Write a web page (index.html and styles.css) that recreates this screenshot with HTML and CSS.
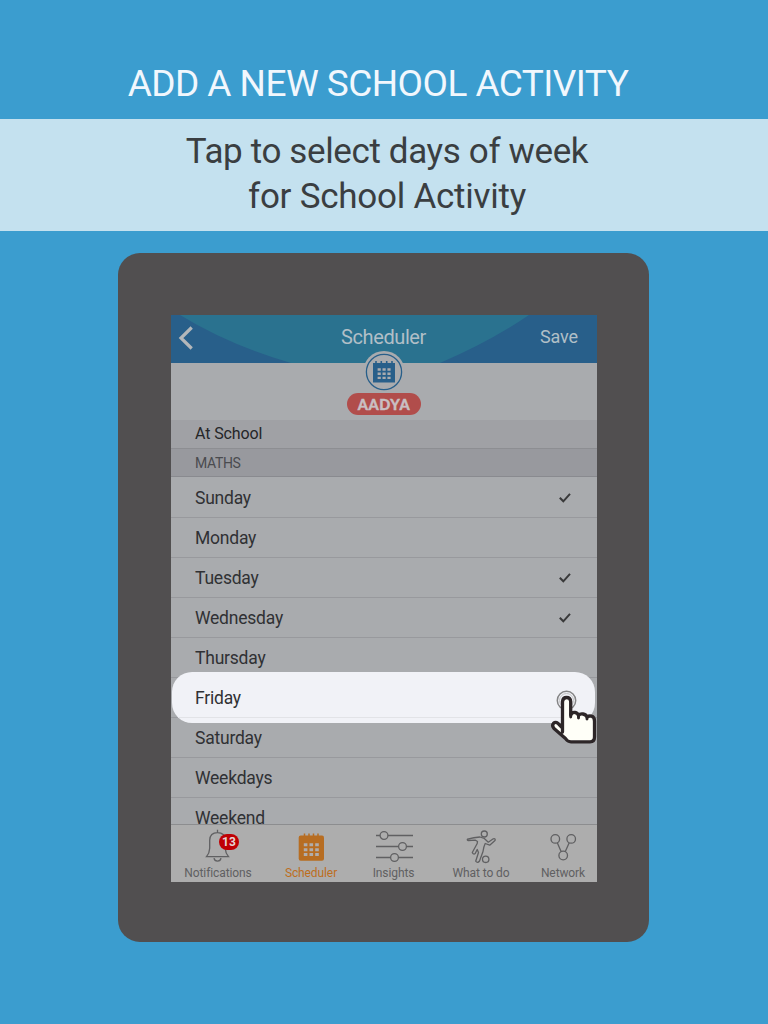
FILE: index.html
```html
<!DOCTYPE html>
<html lang="en">
<head>
<meta charset="utf-8">
<title>Scheduler</title>
<link rel="stylesheet" href="styles.css">
</head>
<body>
<h1 class="title"><span>ADD A NEW SCHOOL ACTIVITY</span></h1>
<div class="banner"><span class="l1">Tap to select days of week</span><span class="l2">for School Activity</span></div>
<main class="tablet">
  <div class="screen">
    <header class="bar">
      <svg class="bar-bg" width="426" height="48" viewBox="0 0 426 48"><path d="M0 0H9Q58 30 120 48H0Z" fill="#285f8a"/><path d="M358 0Q320 26 269 48H426V0Z" fill="#285f8a"/></svg>
      <svg class="back" width="16" height="24" viewBox="0 0 16 24"><path d="M13.700 1.500L3 12L13.700 22.500" fill="none" stroke="#b3b7ba" stroke-width="3.200"/></svg>
      <span class="bar-title">Scheduler</span>
      <span class="save">Save</span>
    </header>
    <section class="profile">
      <svg class="avatar" width="42" height="42" viewBox="0 0 42 42"><circle cx="21" cy="21" r="21" fill="#a9abae"/><circle cx="21" cy="21" r="17.600" fill="none" stroke="#285f8a" stroke-width="1.300"/><path d="M10 12H32V31.500H10Z" fill="#285f8a"/><path d="M13 10V13M18.300 10V13M23.700 10V13M29 10V13" stroke="#285f8a" stroke-width="1.600"/><path d="M14.600 18.500H27.800M14.600 22.700H27.800M14.600 26.900H27.800" stroke="#a9abae" stroke-width="2.400" stroke-dasharray="3.200 1.700"/></svg>
      <span class="name">AADYA</span>
    </section>
    <div class="place">At School</div>
    <div class="subject">MATHS</div>
    <ul class="days">
      <li><span>Sunday</span><svg class="check" width="12" height="10" viewBox="0 0 12 10"><path d="M.8 4.800L4.300 8.300L11 .9" /></svg></li>
      <li><span>Monday</span></li>
      <li><span>Tuesday</span><svg class="check" width="12" height="10" viewBox="0 0 12 10"><path d="M.8 4.800L4.300 8.300L11 .9" /></svg></li>
      <li><span>Wednesday</span><svg class="check" width="12" height="10" viewBox="0 0 12 10"><path d="M.8 4.800L4.300 8.300L11 .9" /></svg></li>
      <li><span>Thursday</span></li>
      <li class="active"><span>Friday</span>
        <svg class="hand" width="51" height="58" viewBox="0 0 51 58"><circle cx="20.500" cy="14.500" r="9.200" fill="none" stroke="#858586" stroke-width="1.500"/><circle cx="20.500" cy="14.500" r="7" fill="none" stroke="#c2c2c3" stroke-width="1"/><path d="M16.500 42V15.500Q17 11.500 20.500 11.500Q24.500 11.500 24.700 15.500V29Q26 26 29 26.500Q31.800 27 32.500 29.500Q34 27.500 37 28Q40 28.500 41 31Q43 29.500 45.500 30.200Q48.500 31 48.500 35V51Q48.500 55.800 44 55.800H25Q21.500 55.800 19.500 52.500L8 42.500Q5.500 39.500 7.500 37.300Q9.500 35.500 12 37.300L16.500 42V46" fill="#fffff8" stroke="#2d2628" stroke-width="3.300" stroke-linejoin="round" stroke-linecap="round"/><path d="M24.700 28V31M32.500 29V32M41 31V33" stroke="#2d2628" stroke-width="2.900" stroke-linecap="round"/></svg>
      </li>
      <li><span>Saturday</span></li>
      <li><span>Weekdays</span></li>
      <li><span>Weekend</span></li>
    </ul>
    <nav class="tabs">
      <div class="tab t1"><svg width="42" height="36" viewBox="0 -1.200 42 36"><path d="M20.500 5V2.500M9.500 29.500H31.500Q28.500 26 28.200 21V13Q28 5.500 20.500 5.500Q13 5.500 12.700 13V21Q12.500 26 9.500 29.500ZM17 31Q17.500 34 20.500 34Q23.500 34 24 31" fill="none" stroke="#606062" stroke-width="1.300"/></svg><span class="badge">13</span><span class="label">Notifications</span></div>
      <div class="tab t2"><svg width="42" height="36" viewBox="0 0 42 36"><rect x="8.700" y="9.500" width="25.300" height="25.300" rx="2" fill="#b76d22"/><path d="M14.500 7.500V11M19 7.500V11M23.500 7.500V11M28 7.500V11" stroke="#b76d22" stroke-width="1.500"/><path d="M13.800 18.800H28.800M13.800 23.700H28.800M13.800 28.600H28.800" stroke="#b0adac" stroke-width="3" stroke-dasharray="3.600 2.100"/></svg><span class="label">Scheduler</span></div>
      <div class="tab t3"><svg width="42" height="36" viewBox="0 0 42 36"><path d="M3 9.500H7M15 9.500H40M3 20.500H25.500M33.500 20.500H40M3 31.500H17.500M25.500 31.500H40" stroke="#606062" stroke-width="1.300"/><g fill="none" stroke="#606062" stroke-width="1.300"><circle cx="11" cy="9.500" r="3.900"/><circle cx="29.500" cy="20.500" r="3.900"/><circle cx="21.500" cy="31.500" r="3.900"/></g></svg><span class="label">Insights</span></div>
      <div class="tab t4"><svg width="42" height="36" viewBox="0 .500 42 36"><g fill="none" stroke="#606062" stroke-width="1.300" stroke-linejoin="round"><circle cx="24.300" cy="8.500" r="3"/><circle cx="25.700" cy="33.800" r="3.200"/><path d="M7.500 13.700Q14 12 20 11.500L24.300 13L28.300 16.700L33.300 13.300Q35.800 12.800 35 15L29.700 19.700L25.200 18Q23.500 21.500 23 26L19.500 35.500Q17.500 38 15.700 35.700L18.500 27L17.200 24L15.200 28Q13.500 29.500 12.300 27L17.200 18L17.500 16L15.500 14.700L8.500 15Q6.800 14.700 7.500 13.700Z"/></g></svg><span class="label">What to do</span></div>
      <div class="tab t5"><svg width="42" height="36" viewBox="0 .300 42 36"><g fill="none" stroke="#606062" stroke-width="1.300"><circle cx="13.300" cy="13.200" r="4.300"/><circle cx="29.200" cy="13.200" r="4.300"/><circle cx="21.200" cy="29.800" r="4.300"/><path d="M15.300 17L19.200 26M27.200 17L23.200 26"/></g></svg><span class="label">Network</span></div>
    </nav>
  </div>
</main>
</body>
</html>
```

FILE: styles.css
```css
* { box-sizing: border-box; }
body { margin: 0; width: 768px; height: 1024px; overflow: hidden; background: #3b9dcf; font-family: Roboto, sans-serif; display: flex; flex-direction: column; }
.title { margin: 0; height: 119px; padding: 62px 12px 0 0; text-align: center; color: #f1f7fd; font-size: 37px; font-weight: 400; line-height: 44px; letter-spacing: -.55px; white-space: nowrap; }
.banner { height: 112px; padding: 10px 0 0 6px; background: #c4e1ef; color: #3a3e41; font-size: 35px; line-height: 45px; display: flex; flex-direction: column; align-items: center; white-space: nowrap; }
.l1 { letter-spacing: -.37px; }
.l2 { letter-spacing: -.25px; }
.tablet { width: 531px; height: 689px; margin: 22px 0 0 118px; padding: 62px 0 0 53px; background: #514f50; border-radius: 22px; }
.screen { width: 426px; height: 567px; background: #a9abae; display: flex; flex-direction: column; }
.bar { position: relative; height: 48px; flex: none; background: #2a728f; color: #b1bfc7; display: grid; grid-template-columns: 1fr auto 1fr; align-items: center; padding: 0 19px 3px 8px; line-height: 24px; }
.bar-bg { position: absolute; inset: 0; }
.back { position: relative; margin-left: -1px; }
.bar-title { position: relative; margin: 0 0 2px 10px; font-size: 20px; letter-spacing: -.4px; }
.save { position: relative; justify-self: end; margin-bottom: 2px; font-size: 18px; letter-spacing: -.1px; }
.profile { position: relative; height: 57px; flex: none; display: flex; flex-direction: column; align-items: center; }
.avatar { position: relative; margin-top: -12px; flex: none; }
.name { width: 74px; height: 22px; border-radius: 11px; background: #b14d4b; color: #c9c0c3; font: 900 14.500px/23px Lato, sans-serif; letter-spacing: .6px; -webkit-text-stroke: .4px #c9c0c3; text-align: center; }
.place { height: 29px; flex: none; padding-left: 24px; background: #a0a1a5; border-bottom: 1px solid #8d8e92; color: #252628; font-size: 16px; letter-spacing: -.12px; line-height: 27px; }
.subject { height: 28px; flex: none; padding-left: 24px; background: #98999e; border-bottom: 1px solid #898a8f; color: #4a4b4f; font-size: 14px; letter-spacing: -.35px; line-height: 28px; }
.days { flex: 1; min-height: 0; overflow: hidden; margin: 0; padding: 1px 0 0; list-style: none; }
.days li { position: relative; height: 40px; display: flex; align-items: center; justify-content: space-between; padding: 0 26px 0 24px; color: #303134; border-bottom: 1px solid #98999d; font-size: 17.500px; letter-spacing: -.22px; line-height: 24px; }
.check { fill: none; stroke: #39393a; stroke-width: 2; }
.days .active { z-index: 1; }
.active::before { content: ""; position: absolute; left: 1px; top: -6px; width: 423px; height: 51px; border-radius: 20px; background: #f1f2f7; }
.active::after { content: ""; position: absolute; left: 8px; right: 8px; bottom: -1px; height: 1px; background: #e2e3e7; }
.active span { position: relative; }
.hand { position: absolute; left: 375px; top: 8px; z-index: 2; }
.tabs { height: 58px; flex: none; background: #adadad; border-top: 1px solid #8c8d8f; display: flex; color: #606062; }
.tab { position: relative; flex: none; display: flex; flex-direction: column; align-items: center; }
.tab svg { overflow: visible; margin-top: 1px; }
.t1 { width: 94px; }
.t2 { width: 92px; color: #bd6e1d; }
.t3 { width: 73px; }
.t4 { width: 102px; }
.t5 { width: 62px; }
.label { font-size: 12px; letter-spacing: -.1px; line-height: 14px; margin-top: 4px; white-space: nowrap; }
.badge { position: absolute; left: 48px; top: 9px; width: 20px; height: 16px; border-radius: 8px; background: #bf0005; color: #e6d5d5; font-size: 12px; font-weight: 700; line-height: 16px; text-align: center; }
```
